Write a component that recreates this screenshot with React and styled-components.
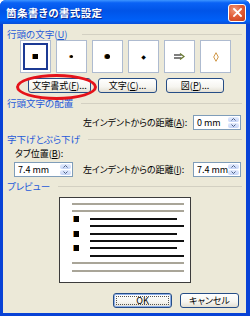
import styled, { createGlobalStyle } from 'styled-components';

const GlobalStyle = createGlobalStyle`
  html, body { margin: 0; padding: 0; background: #fff; }
  body { width: 250px; height: 316px; overflow: hidden; }
`;

const font = `'Noto Sans CJK JP', 'Noto Sans', sans-serif`;

const Window = styled.div`
  position: relative;
  width: 250px;
  height: 316px;
  box-sizing: border-box;
  display: flex;
  flex-direction: column;
  background: #0842d6;
  border-radius: 6px 6px 0 0;
  overflow: hidden;
  font-family: ${font};
  font-feature-settings: 'palt';
`;

const TitleBar = styled.div`
  height: 24px;
  flex: none;
  display: flex;
  align-items: center;
  justify-content: space-between;
  padding: 0 4px 0 6px;
  background: linear-gradient(180deg, #3d95ff 0%, #0a62f5 12%, #0054e8 45%, #0060f8 85%, #0a4fd8 100%);
`;

const Title = styled.span`
  color: #fff;
  font-size: 10.5px;
  font-weight: 700;
  letter-spacing: 0.4px;
  text-shadow: 1px 1px 0 #0b2790;
`;

const CloseButton = styled.div`
  width: 16px;
  height: 16px;
  margin-top: 1px;
  border: 1px solid #fff;
  border-radius: 3px;
  background: radial-gradient(circle at 35% 30%, #f09a7a 0%, #e2603a 45%, #c23a18 100%);
  display: flex;
  align-items: center;
  justify-content: center;
`;

const Client = styled.div`
  flex: 1;
  margin: 0 4px 3px 3px;
  background: #ece9d8;
  display: flex;
  flex-direction: column;
  font-size: 9px;
  color: #000;
`;

const GroupHeader = styled.div`
  height: 12px;
  margin-top: ${(p) => p.$top}px;
  padding: 0 4px;
  display: flex;
  align-items: center;
  gap: ${(p) => p.$gap || 12}px;
  color: #1f5ad8;
  font-size: 9.5px;
  line-height: 12px;
  white-space: nowrap;

  &::after {
    content: '';
    flex: 1;
    height: 1px;
    background: #d3d0c2;
  }
`;

const BulletRow = styled.div`
  display: flex;
  gap: 5px;
  padding-left: 17px;
`;

const BulletBox = styled.div`
  position: relative;
  width: 31px;
  height: 33px;
  box-sizing: border-box;
  background: #fff;
  border: 1px solid #aebbd0;
  display: flex;
  align-items: center;
  justify-content: center;

  ${(p) =>
    p.$selected &&
    `&::before {
      content: '';
      position: absolute;
      inset: 2px;
      border: 2px solid #1c3a94;
    }`}
`;

const Glyph = styled.span`
  font-family: 'DejaVu Sans', sans-serif;
  font-size: ${(p) => p.$size}px;
  line-height: 1;
  color: #000;
`;

const Dot = styled.span`
  display: block;
  width: ${(p) => p.$size}px;
  height: ${(p) => p.$size}px;
  background: #000;
  border-radius: ${(p) => (p.$round ? '50%' : '0')};
  box-shadow: -1px 0 0 #d0842a;
`;

const ButtonRow = styled.div`
  display: flex;
  margin-top: 5px;
  padding-left: 25px;
`;

const Button = styled.button`
  width: ${(p) => p.$w}px;
  height: 15px;
  margin-left: ${(p) => p.$ml || 0}px;
  padding: 0;
  box-sizing: border-box;
  border: 1px solid #264d86;
  border-radius: 3px;
  background: linear-gradient(180deg, #ffffff 0%, #f6f5f0 60%, #e3dfd3 100%);
  font-family: ${font};
  font-feature-settings: 'palt';
  font-size: 9px;
  line-height: 13px;
  color: #000;
  white-space: nowrap;
  position: relative;

  ${(p) =>
    p.$default &&
    `box-shadow: inset 0 0 0 1px #8fb0e8;
    &::after {
      content: '';
      position: absolute;
      inset: 2px;
      border: 1px dotted #555;
    }`}
`;

const FieldRow = styled.div`
  display: flex;
  align-items: center;
  margin-top: ${(p) => p.$top}px;
  padding: 0 5px 0 ${(p) => p.$left || 0}px;
`;

const FieldLabel = styled.span`
  flex: none;
  margin-left: ${(p) => p.$ml || 0}px;
  white-space: nowrap;
  letter-spacing: -0.1px;
`;

const SpinBox = styled.div`
  flex: none;
  width: ${(p) => p.$w}px;
  height: 15px;
  margin-left: ${(p) => (p.$push ? 'auto' : '0')};
  box-sizing: border-box;
  border: 1px solid #7f9db9;
  background: #fff;
  display: flex;
  align-items: stretch;
  padding: 1px;
`;

const SpinValue = styled.span`
  flex: 1;
  min-width: 0;
  padding-left: 2px;
  line-height: 11px;
  font-size: 9px;
  white-space: nowrap;
  overflow: hidden;
`;

const SpinButtons = styled.div`
  flex: none;
  width: 11px;
  display: flex;
  flex-direction: column;
  gap: 1px;
`;

const SpinHalf = styled.div`
  flex: 1;
  border-radius: 2px;
  background: linear-gradient(180deg, #e4ecfd 0%, #c6d5f8 100%);
  display: flex;
  align-items: center;
  justify-content: center;
`;

const SubLabel = styled.div`
  margin-top: 3px;
  padding-left: 12px;
  height: 12px;
  line-height: 12px;
`;

const Preview = styled.div`
  margin: 5px 0 0 56px;
  width: 132px;
  height: 86px;
  box-sizing: border-box;
  background: #fff;
  border: 1px solid #3c3c3c;
  padding: 5px 0 0 12px;
  display: flex;
  flex-direction: column;
  gap: 5.4px;
`;

const PreviewLine = styled.div`
  position: relative;
  height: 2px;
  margin-left: ${(p) => (p.$indent ? 18 : 0)}px;
  width: ${(p) => p.$w}px;
  background: ${(p) => (p.$gray ? '#a9a598' : '#111')};
`;

const PreviewBullet = styled.span`
  position: absolute;
  left: -16px;
  top: -2px;
  width: 5px;
  height: 6px;
  background: #000;
  box-shadow: -1px 0 0 #d0842a;
`;

const Footer = styled.div`
  display: flex;
  justify-content: flex-end;
  gap: 8px;
  margin-top: 10px;
  padding-right: 7px;
`;

const Highlight = styled.div`
  position: absolute;
  left: 16px;
  top: 74px;
  width: 81px;
  height: 26px;
  box-sizing: border-box;
  border: 3px solid #e5121a;
  border-radius: 50%;
  pointer-events: none;
`;

function Spin({ value, w, push }) {
  return (
    <SpinBox $w={w} $push={push}>
      <SpinValue>{value}</SpinValue>
      <SpinButtons>
        <SpinHalf>
          <svg width="5" height="3" viewBox="0 0 5 3">
            <path d="M0.5 2.5 L2.5 0.5 L4.5 2.5" fill="none" stroke="#4d6185" strokeWidth="1" />
          </svg>
        </SpinHalf>
        <SpinHalf>
          <svg width="5" height="3" viewBox="0 0 5 3">
            <path d="M0.5 0.5 L2.5 2.5 L4.5 0.5" fill="none" stroke="#4d6185" strokeWidth="1" />
          </svg>
        </SpinHalf>
      </SpinButtons>
    </SpinBox>
  );
}

const previewRows = [
  { gray: true, w: 112 },
  { gray: true, w: 112 },
  { bullet: true, w: 87 },
  { w: 94 },
  { bullet: true, w: 87 },
  { w: 94 },
  { bullet: true, w: 87 },
  { w: 94 },
  { gray: true, w: 112 },
  { gray: true, w: 112 }
];

export default function App() {
  return (
    <>
      <GlobalStyle />
      <Window>
        <TitleBar>
          <Title>箇条書きの書式設定</Title>
          <CloseButton>
            <svg width="9" height="9" viewBox="0 0 9 9">
              <path d="M1 1 L8 8 M8 1 L1 8" stroke="#fff" strokeWidth="1.8" strokeLinecap="square" />
            </svg>
          </CloseButton>
        </TitleBar>

        <Client>
          <GroupHeader $top={4} $gap={15}>
            <span>行頭の文字(<u>U</u>)</span>
          </GroupHeader>
          <BulletRow>
            <BulletBox $selected>
              <Dot $size={5} />
            </BulletBox>
            <BulletBox>
              <Dot $size={3} $round />
            </BulletBox>
            <BulletBox>
              <Dot $size={5} $round />
            </BulletBox>
            <BulletBox>
              <Glyph $size={6}>◆</Glyph>
            </BulletBox>
            <BulletBox>
              {/* double arrow */}
              <svg width="11" height="7" viewBox="0 0 11 7">
                <path d="M0 2 H7.5 M0 5 H7.5" stroke="#000" strokeWidth="1.2" />
                <path d="M6 0.5 L10 3.5 L6 6.5" fill="none" stroke="#6a7a30" strokeWidth="1.2" />
              </svg>
            </BulletBox>
            <BulletBox>
              {/* lozenge */}
              <svg width="6" height="10" viewBox="0 0 6 10">
                <path d="M3 0.7 L5.3 5 L3 9.3 L0.7 5 Z" fill="none" stroke="#d09848" strokeWidth="1" />
              </svg>
            </BulletBox>
          </BulletRow>

          <ButtonRow>
            <Button $w={63}>文字書式(<u>F</u>)...</Button>
            <Button $w={59} $ml={7}>文字(<u>C</u>)...</Button>
            <Button $w={58} $ml={9}>図(<u>P</u>)...</Button>
          </ButtonRow>

          <GroupHeader $top={4} $gap={8}>
            <span>行頭文字の配置</span>
          </GroupHeader>
          <FieldRow $top={6} $left={80}>
            <FieldLabel>左インデントからの距離(<u>A</u>):</FieldLabel>
            <Spin value="0 mm" w={48} push />
          </FieldRow>

          <GroupHeader $top={3} $gap={8}>
            <span>字下げとぶら下げ</span>
          </GroupHeader>
          <SubLabel>タブ位置(<u>B</u>):</SubLabel>
          <FieldRow $top={2} $left={11}>
            <Spin value="7.4 mm" w={59} />
            <FieldLabel $ml={10}>左インデントからの距離(<u>I</u>):</FieldLabel>
            <Spin value="7.4 mm" w={48} push />
          </FieldRow>

          <GroupHeader $top={3} $gap={8}>
            <span>プレビュー</span>
          </GroupHeader>
          <Preview>
            {previewRows.map((r, i) => (
              <PreviewLine key={i} $gray={r.gray} $indent={!r.gray} $w={r.w}>
                {r.bullet && <PreviewBullet />}
              </PreviewLine>
            ))}
          </Preview>

          <Footer>
            <Button $w={59} $default>OK</Button>
            <Button $w={59}>キャンセル</Button>
          </Footer>
        </Client>

        <Highlight />
      </Window>
    </>
  );
}
